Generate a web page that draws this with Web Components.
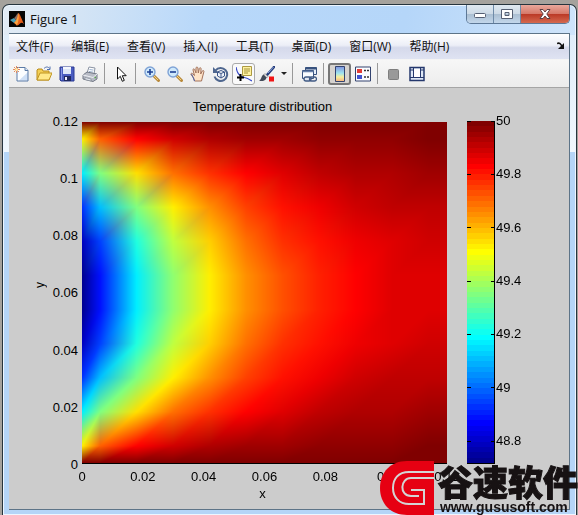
<!DOCTYPE html>
<html lang="zh-CN">
<head>
<meta charset="utf-8">
<title>Figure 1</title>
<style>
html, body { margin: 0; min-height: 100%; }
body { background: #a5a29d; font-family: "Open Sans", "Noto Sans CJK SC", sans-serif; font-size: 12px; color: #111; }
</style>
</head>
<body>
<figure-window></figure-window>

<script>
const define = (name, html, init) => customElements.define(name, class extends HTMLElement {
  constructor() {
    super();
    const t = document.createElement('template');
    t.innerHTML = html;
    this.attachShadow({ mode: 'open' }).append(t.content.cloneNode(true));
  }
  connectedCallback() { if (init && !this.ready) { this.ready = true; init(this, this.shadowRoot); } }
});

const glass = (sign) => `<path d="M9.500 9.500l5 5" stroke="#b98a3c" stroke-width="3" stroke-linecap="round"/><path d="M10 10l4 4" stroke="#f3d27c" stroke-width="1"/>
<circle cx="6" cy="6" r="5" fill="#cfe9fb" stroke="#7fa3d6" stroke-width="1.4"/><path d="M3 6h6${sign}" stroke="#1c3f94" stroke-width="1.6"/>`;
const ICONS = {
  new: `<path d="M4 1.500h8l3 3v10.500H4z" fill="#fbfdff"/><path d="M6 14.500h9V6z" fill="#cfe0f6"/><path d="M4 1.500h8l3 3v10.500H4z" stroke="#5b7ba6"/><path d="M12 1.500v3h3" fill="#dfeaf8" stroke="#5b7ba6"/><path d="M3.500 0v7M0 3.500h7M1 1l5 5M6 1l-5 5" stroke="#e58a5a"/><circle cx="3.500" cy="3.500" r="1.500" fill="#ffe9a8"/>`,
  open: `<path d="M1 14V4l1-1h4l1 2h6v9z" fill="#f3cf55" stroke="#b98c1d"/><path d="M1 14l3-7h12l-3 7z" fill="#ffe98a" stroke="#c09522"/><path d="M8 2.500c2-2 4-2 5.500 0M14 .5v3h-3" fill="none" stroke="#4e6fae"/>`,
  save: `<path d="M1 1h14v14H2l-1-1z" fill="#4a5cc0" stroke="#2b3a94"/><path d="M4 1h8v7H4z" fill="#f4f7fd"/><path d="M4 3h8v5H4z" fill="#dce6f7"/><path d="M5 10h7v5H5z" fill="#20295f"/><path d="M6 11h2v3H6z" fill="#eef"/><path d="M2 2h1v12H2z" fill="#8595e4"/>`,
  print: `<path d="M5 7l2-6 6 1-1 6z" fill="#fff" stroke="#8a93a3"/><path d="M7.500 3.500l4 .6M7 5.500l4 .6" stroke="#9bb2d0"/><path d="M1 9l4-3 10 2v5l-4 2.500L1 13z" fill="#b8bcc6" stroke="#727885"/><path d="M1 9l10 2.500L15 8" fill="none" stroke="#eef0f4"/><path d="M3 11.500l6 1.500v2l-6-1.500z" fill="#e9edf4" stroke="#777d8a" stroke-width=".6"/><path d="M12.500 11.500h1.500" stroke="#5ba64c" stroke-width="1.500"/>`,
  cursor: `<path d="M4.500 1v12l2.800-2.700 2 5 2-.9-2-4.700h3.900z" fill="#fff" stroke="#111"/>`,
  zoomin: glass('M6 3v6'),
  zoomout: glass(''),
  hand: `<path d="M4.500 15l-1-3L1 8.500c-.6-1 .8-1.700 1.600-.8L4.500 9.500 3 4c-.3-1.300 1.300-1.500 1.700-.4L6 7V2c0-1.300 1.800-1.300 1.900 0L8.300 7l1-4.500c.3-1.200 1.900-.9 1.800.3L10.700 8l1.600-3c.6-1 2-.4 1.600.7L12.500 11l-1 4z" fill="#fde3c8" stroke="#a3725b"/><path d="M1.500 8L3.500 12l1 3" fill="none" stroke="#5065a8"/>`,
  rotate: `<path d="M2.500 4.500a6.500 6.500 0 1 1-1 6" fill="none" stroke="#4f678f" stroke-width="2"/><path d="M0 1v6h6z" fill="#4f678f"/><path d="M8 4.500l3.500 1.500v4L8 12l-3.500-2V6zM4.500 6L8 7.500 11.500 6M8 7.500V12" fill="#eef3fa" stroke="#3c5688"/>`,
  data: `<path d="M6.500 .5h9v9h-9z" fill="#fff2a0" stroke="#ad9a42"/><path d="M8 3h6M8 5h6M8 7h4" stroke="#a3923c"/><path d="M0 1c1 6 3 9 7 10s6 2 9 4" fill="none" stroke="#3749c8" stroke-width="1.200"/><path d="M4.500 8v7M1 11.500h7" stroke="#000" stroke-width="2"/>`,
  brush: `<path d="M15 1L8 9" stroke="#263e7d" stroke-width="2.600" stroke-linecap="round"/><path d="M14.500 1L9 7" stroke="#91a9dc"/><path d="M6 7.500l3 3-1.500 1.500-3-3z" fill="#dedede" stroke="#777" stroke-width=".6"/><path d="M4.500 8.500C2 10 3 13 0 15c4 .5 7-.5 7.500-3.500z" fill="#434b59"/><path d="M10 10.500h5v5h-5z" fill="#f01414"/>`,
  link: `<path d="M4.500 1.500h11v7h-11z" fill="#e7f0fb" stroke="#39537f"/><path d="M4.500 2.500h11" stroke="#39537f" stroke-width="2"/><path d="M1.500 4.500h11v8h-11z" fill="#f9fcff" stroke="#39537f"/><path d="M1.500 5.500h11" stroke="#6982ab" stroke-width="1.500"/><rect x="3" y="11" width="7" height="4" rx="2" fill="#dfe6f0" stroke="#405a84" stroke-width="1.300"/><rect x="8.500" y="11" width="7" height="4" rx="2" fill="none" stroke="#405a84" stroke-width="1.300"/>`,
  colorbar: `<defs><linearGradient id="g" x2="0" y2="1"><stop stop-color="#7f92e0"/><stop offset=".45" stop-color="#9ee4ef"/><stop offset=".7" stop-color="#f7ef9d"/><stop offset="1" stop-color="#f6b07c"/></linearGradient></defs><path d="M3.500 .5h9v15h-9z" fill="url(#g)" stroke="#33436f"/>`,
  legend: `<path d="M.5 1h15v14H.5z" fill="#fbfcff" stroke="#33436f"/><path d="M2 3h5v4H2z" fill="#e33c35"/><path d="M2 9h5v4H2z" fill="#4152cf"/><path d="M9 4.500h2m1 0h2M9 11h2m1 0h2" stroke="#333" stroke-width="1.400"/>`,
  hide: `<rect x="2.500" y="3.500" width="10" height="10" rx="1" fill="#999" stroke="#7e7e7e"/>`,
  show: `<path d="M1 1.500h14v13H1z" fill="#dfe8f6" stroke="#25386d" stroke-width="1.500"/><path d="M4.500 2v9.500M11.500 2v9.500M1 11.500h14M1 4h3M12 4h3" stroke="#25386d"/><path d="M5 3h6v8H5z" fill="#fff"/>`
};

define('tool-button', `<style>
:host { display: block; flex: none; }
button { display: grid; place-items: center; box-sizing: border-box; width: 23px; height: 22px; padding: 0; border: 1px solid transparent; border-radius: 3px; background: none; }
:host([hot]) button { background: #fafafa; border-color: #aaa; }
:host([pressed]) button { background: #d6d3cf; border: 2px solid #777; }
svg { display: block; }
</style><button type="button"></button>`, (el, root) => {
  const b = root.querySelector('button');
  b.setAttribute('aria-label', el.getAttribute('label'));
  b.innerHTML = `<svg width="16" height="16" viewBox="0 0 16 16" fill="none">${ICONS[el.getAttribute('icon')]}</svg>`;
});

define('tool-bar', `<style>
:host { display: flex; align-items: center; height: 28px; background: linear-gradient(#f7f7f7, #ececec); border-bottom: 1px solid #a5a5a5; box-sizing: border-box; }
i { flex: none; width: 1px; height: 21px; margin: 0 4px 0 3px; background: #999; }
.drop { width: 11px; height: 22px; padding: 0; border: 0; background: none; display: grid; place-items: center; }
.drop::before { content: ""; border: 3px solid transparent; border-top-color: #222; border-bottom: 0; }
</style>
<tool-button icon="new" label="新建"></tool-button><tool-button icon="open" label="打开"></tool-button><tool-button icon="save" label="保存"></tool-button><tool-button icon="print" label="打印"></tool-button><i></i>
<tool-button icon="cursor" label="编辑绘图"></tool-button><i></i>
<tool-button icon="zoomin" label="放大"></tool-button><tool-button icon="zoomout" label="缩小"></tool-button><tool-button icon="hand" label="平移"></tool-button><tool-button icon="rotate" label="三维旋转"></tool-button><tool-button icon="data" label="数据游标" hot></tool-button><tool-button icon="brush" label="刷亮"></tool-button><button class="drop" type="button" aria-label="刷亮选项"></button><i></i>
<tool-button icon="link" label="链接绘图"></tool-button><i></i>
<tool-button icon="colorbar" label="颜色栏" pressed></tool-button><tool-button icon="legend" label="图例"></tool-button><i></i>
<tool-button icon="hide" label="隐藏绘图工具"></tool-button><tool-button icon="show" label="显示绘图工具"></tool-button>`);

define('menu-bar', `<style>
:host { display: flex; align-items: center; gap: 18px; height: 26px; padding: 0 4px 2px 7px; box-sizing: border-box; background: linear-gradient(#fff, #eceef7 45%, #d5d9eb 55%, #dfe3f2); border-bottom: 1px solid #f4f4f4; }
button { flex: none; padding: 0; border: 0; background: none; font: inherit; color: inherit; white-space: nowrap; }
.dock { margin-left: auto; }
svg { display: block; }
</style>
<button type="button">文件(F)</button><button type="button">编辑(E)</button><button type="button">查看(V)</button><button type="button">插入(I)</button><button type="button">工具(T)</button><button type="button">桌面(D)</button><button type="button">窗口(W)</button><button type="button">帮助(H)</button>
<button type="button" class="dock" aria-label="停靠"><svg width="8" height="8" viewBox="0 0 8 8"><path d="M0 1.500c2-1 4.500 0 5 4" fill="none" stroke="#111" stroke-width="1.500"/><path d="M7 1v6H1z" fill="#111"/></svg></button>`);

define('title-bar', `<style>
:host { display: flex; align-items: flex-start; height: 28px; }
.logo { flex: none; margin: 6px 5px 0 0; }
h1 { margin: 5px 0 0; font-size: 13px; line-height: 18px; font-weight: 400; flex: 1; }
.controls { display: flex; border: 1px solid #5d7896; border-top: 0; border-radius: 0 0 5px 5px; overflow: hidden; }
button { display: grid; place-items: center; box-sizing: border-box; width: 27px; height: 18px; padding: 0; border: 0; border-right: 1px solid #6f8ba8; background: linear-gradient(#dfe8f0, #cddae6 48%, #abbfd2 52%, #c3d7eb); }
.close { width: 48px; border: 0; background: linear-gradient(#e9a89c, #d6796a 48%, #bb3a27 52%, #d5694f); }
</style>
<svg class="logo" width="16" height="16" viewBox="0 0 16 16"><path d="M0 0h16v16H0z" fill="#050505"/><path d="M1 9l4-2 3 3-3 2z" fill="#4aa0b8"/><path d="M5 7c2-1 3-5 4.500-5L8 10z" fill="#8a6c64"/><path d="M9.500 2C11 3 13 9 15 13c-2-2-3-1.500-4-.5S9 14.500 8 14.500 6.500 12.500 5 12c3-2 3.500-7 4.500-10z" fill="#e8601c"/><path d="M9.500 2c.6 3 .2 8-1.500 12.500-.5-1-1.500-2-3-2.500 3-2 3.500-7 4.500-10z" fill="#f7a544"/></svg>
<h1>Figure 1</h1>
<div class="controls">
<button type="button" aria-label="最小化"><svg width="12" height="10"><rect x=".5" y="4.500" width="11" height="4" rx="1" fill="#fff" stroke="#555f73"/></svg></button>
<button type="button" aria-label="最大化"><svg width="12" height="10"><path d="M.5.5h11v9H.5zM4 3.500v3h4v-3z" fill="#fff" fill-rule="evenodd" stroke="#555f73"/></svg></button>
<button type="button" class="close" aria-label="关闭"><svg width="12" height="10" viewBox="0 0 12 10"><path d="M1 .5h3L6 3 8 .5h3L7.800 5 11 9.500H8L6 7 4 9.500H1L4.200 5z" fill="#fff" stroke="#5b4145"/></svg></button>
</div>`);

/* 64-entry "jet" colour map, u in 0..1 */
const jet = (u) => {
  const v = (Math.min(63, Math.floor(u * 64)) + 1) / 64;
  return [3, 2, 1].map((c) => 255 * Math.max(0, Math.min(1, 1.5 - Math.abs(4 * v - c))));
};

/* Steady conduction on a 10x10 cell grid: top and bottom held at 50,
   heat drawn out at the left, right side insulated. */
function solve() {
  const n = 10, q = 1;
  const d = Array.from({ length: n }, () => new Float64Array(n));
  for (let k = 0; k < 1500; k++) for (let j = 0; j < n; j++) for (let i = 0; i < n; i++) {
    let s = 0, w = 0;
    if (i > 0) { s += d[j][i - 1]; w++; } else s += q;
    if (i < n - 1) { s += d[j][i + 1]; w++; }
    if (j > 0) { s += d[j - 1][i]; w++; } else w += 2;
    if (j < n - 1) { s += d[j + 1][i]; w++; } else w += 2;
    d[j][i] = s / w;
  }
  const rows = [new Array(n + 2).fill(0)];
  for (const r of d) rows.push([r[0] + q / 2, ...r, r[n - 1]]);
  rows.push(new Array(n + 2).fill(0));
  const max = Math.max(...rows.flat());
  return rows.map((r) => r.map((t) => 1 - t / max));
}

define('heat-map', `<style>
:host { display: block; border-bottom: 1px solid #000; }
canvas { display: block; width: 100%; height: auto; }
</style><canvas width="365" height="341" role="img" aria-label="Temperature distribution"></canvas>`, (el, root) => {
  const c = root.querySelector('canvas'), g = c.getContext('2d'), W = c.width, H = c.height;
  const col = solve().map((r) => r.map(jet));
  const img = g.createImageData(W, H);
  const locate = (p) => {
    if (p < .5) return [0, p * 2];
    if (p >= 9.5) return [10, (p - 9.5) * 2];
    const k = Math.floor(p - .5);
    return [k + 1, p - .5 - k];
  };
  for (let y = 0; y < H; y++) for (let x = 0; x < W; x++) {
    const [i, a] = locate((x + .5) / W * 10), [j, b] = locate((H - y - .5) / H * 10);
    const p00 = col[j][i], p10 = col[j][i + 1], p01 = col[j + 1][i], p11 = col[j + 1][i + 1];
    const o = (y * W + x) * 4;
    for (let k = 0; k < 3; k++) {
      img.data[o + k] = a > b
        ? p00[k] + a * (p10[k] - p00[k]) + b * (p11[k] - p10[k])
        : p00[k] + b * (p01[k] - p00[k]) + a * (p11[k] - p01[k]);
    }
    img.data[o + 3] = 255;
  }
  g.putImageData(img, 0, 0);
});

define('color-bar', `<style>
:host { display: grid; grid-template-columns: 24px 4px 1fr; }
.bar { grid-area: 1 / 1 / 2 / 3; display: flex; flex-direction: column; border-right: 1px solid #000; border-bottom: 1px solid #000; }
.bar span { flex: 1; }
.ticks { display: grid; grid-template-rows: repeat(6, 100fr) 43fr; }
.left { grid-area: 1 / 1; }
.right { grid-area: 1 / 2 / 2 / 4; }
.ticks div { height: 0; display: flex; align-items: center; gap: 1px; }
.ticks div::before { content: ""; width: 4px; height: 1px; background: #000; }
</style>
<div class="bar"></div>
<div class="ticks left"><div></div><div></div><div></div><div></div><div></div><div></div><div></div></div>
<div class="ticks right"><div>50</div><div>49.8</div><div>49.6</div><div>49.4</div><div>49.2</div><div>49</div><div>48.8</div></div>`, (el, root) => {
  const bar = root.querySelector('.bar');
  for (let i = 63; i >= 0; i--) {
    const s = document.createElement('span');
    s.style.background = `rgb(${jet((i + .5) / 64).map(Math.round)})`;
    bar.append(s);
  }
});

define('plot-figure', `<style>
:host { display: grid; grid-template-columns: 16px 29px minmax(0, 1fr) 122px; grid-template-rows: 14px auto 20px 14px; align-content: start; padding: 12px 0 8px 24px; background: #ccc; font: 13px/14px "Liberation Sans", sans-serif; color: #000; }
h2 { grid-area: 1 / 3; margin: 0; font: inherit; text-align: center; white-space: nowrap; }
.yl { grid-area: 2 / 1; writing-mode: vertical-rl; transform: rotate(180deg); text-align: center; font-size: 12px; margin-bottom: 8px; }
.yt { grid-area: 2 / 2; display: flex; flex-direction: column; justify-content: space-between; text-align: right; margin: 1px 0 -8px; }
heat-map { grid-area: 2 / 3; margin: 8px 0 0 4px; }
color-bar { grid-area: 2 / 4; margin: 7px 0 0 20px; }
.xt { grid-area: 3 / 3; display: flex; justify-content: space-between; margin: 6px 0 0 4px; }
.xt span { width: 0; display: flex; justify-content: center; }
.xl { grid-area: 4 / 3; text-align: center; margin-top: 3px; }
</style>
<h2>Temperature distribution</h2>
<div class="yl">y</div>
<div class="yt"><span>0.12</span><span>0.1</span><span>0.08</span><span>0.06</span><span>0.04</span><span>0.02</span><span>0</span></div>
<heat-map></heat-map>
<color-bar></color-bar>
<div class="xt"><span>0</span><span>0.02</span><span>0.04</span><span>0.06</span><span>0.08</span><span>0.1</span><span>0.12</span></div>
<div class="xl">x</div>`);

define('site-mark', `<style>
:host { display: flex; align-items: flex-end; gap: 4px; color: #171213; }
svg { display: block; flex: none; }
.words { display: flex; flex-direction: column; }
b { font: 900 35px/36px "Noto Sans CJK SC", sans-serif; -webkit-text-stroke: 1px #171213; white-space: nowrap; }
a { color: inherit; text-decoration: none; font: bold 14px/16px "Liberation Sans", sans-serif; padding-left: 2px; }
</style>
<svg width="54" height="54" viewBox="0 0 54 54"><path d="M54 0H27C11 0 0 11 0 27s11 27 27 27h27z" fill="#e60012"/><path d="M54 11H29C18 11 13 18 13 27s6 16 16 16h15V29H31" fill="none" stroke="#d4d4d4" stroke-width="2"/><path d="M54 17H31c-11 0-12 18 0 18h8" fill="none" stroke="#d4d4d4" stroke-width="2"/></svg>
<div class="words"><b>谷速软件</b><a href="http://www.gususoft.com">www.gususoft.com</a></div>`);

define('figure-window', `<style>
:host { display: block; position: relative; min-height: 100vh; box-sizing: border-box; padding: 4px 1px 0 2px; overflow: hidden; }
.frame { display: flex; flex-direction: column; min-height: calc(100vh - 4px); box-sizing: border-box; padding: 0 6px 5px; border: 1px solid #26343d; border-bottom: 0; border-radius: 7px 7px 0 0; background: linear-gradient(100deg, #e2ebf4 0, #d3e4f5 80px, #b8d8fa 200px, #b5d6f9 70%, #cfe4fa) top / 100% 30px no-repeat, linear-gradient(#dcebf9, #f0f7fd 147px, #b5d5f7 147px); box-shadow: inset 0 0 0 1px #eef6ff; }
main { flex: 1; display: flex; flex-direction: column; border: 1px solid #5d7488; border-left: 0; }
plot-figure { flex: 1; }
site-mark { position: absolute; right: 0; bottom: 0; }
</style>
<div class="frame"><title-bar></title-bar><main><menu-bar></menu-bar><tool-bar></tool-bar><plot-figure></plot-figure></main></div>
<site-mark></site-mark>`);
</script>
</body>
</html>
